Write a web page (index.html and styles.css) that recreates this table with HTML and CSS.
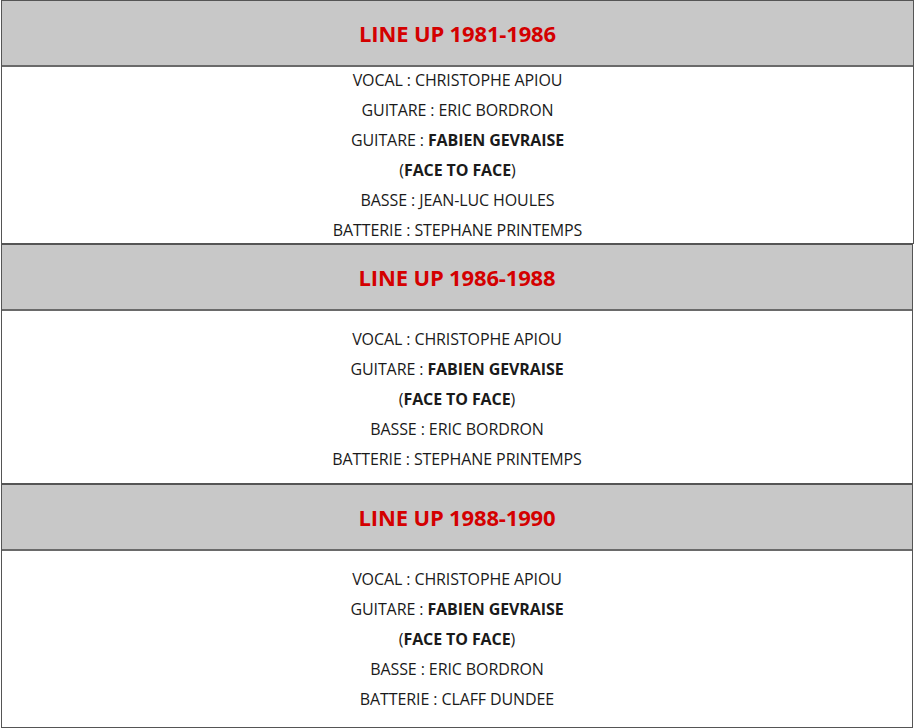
FILE: index.html
```html
<!DOCTYPE html>
<html>
<head>
<meta charset="utf-8">
<link rel="stylesheet" href="styles.css">
</head>
<body>
<div class="page">
  <section class="lineup first">
    <div class="head"><h2>LINE UP 1981-1986</h2></div>
    <div class="body">
      <p>VOCAL : CHRISTOPHE APIOU</p>
      <p>GUITARE : ERIC BORDRON</p>
      <p>GUITARE : <b>FABIEN GEVRAISE</b></p>
      <p>(<b>FACE TO FACE</b>)</p>
      <p>BASSE : JEAN-LUC HOULES</p>
      <p>BATTERIE : STEPHANE PRINTEMPS</p>
    </div>
  </section>
  <section class="lineup">
    <div class="head"><h2>LINE UP 1986-1988</h2></div>
    <div class="body">
      <p>VOCAL : CHRISTOPHE APIOU</p>
      <p>GUITARE : <b>FABIEN GEVRAISE</b></p>
      <p>(<b>FACE TO FACE</b>)</p>
      <p>BASSE : ERIC BORDRON</p>
      <p>BATTERIE : STEPHANE PRINTEMPS</p>
    </div>
  </section>
  <section class="lineup last">
    <div class="head"><h2>LINE UP 1988-1990</h2></div>
    <div class="body">
      <p>VOCAL : CHRISTOPHE APIOU</p>
      <p>GUITARE : <b>FABIEN GEVRAISE</b></p>
      <p>(<b>FACE TO FACE</b>)</p>
      <p>BASSE : ERIC BORDRON</p>
      <p>BATTERIE : CLAFF DUNDEE</p>
    </div>
  </section>
</div>
</body>
</html>
```
FILE: styles.css
```css
html, body {
  margin: 0;
  padding: 0;
  background: #ffffff;
}
.page {
  width: 914px;
  padding-left: 1px;
  box-sizing: border-box;
  font-family: "Open Sans", "Liberation Sans", sans-serif;
  color: #1a1a1a;
}
.lineup {
  width: 912px;
  border: 1px solid #555555;
  border-top: 2px solid #555555;
  box-sizing: border-box;
  display: flex;
  flex-direction: column;
  overflow: hidden;
}
.lineup.first {
  width: 913px;
  border-top-width: 1px;
  height: 244px;
}
.lineup.last {
  height: 245px;
}
.lineup + .lineup {
  margin-top: -1px;
}
.head {
  height: 64px;
  background: #c8c8c8;
  border-bottom: 2px solid #6a6a6a;
  display: flex;
  align-items: center;
  justify-content: center;
  flex-shrink: 0;
}
.head h2 {
  margin: 0;
  font-size: 22px;
  letter-spacing: -0.15px;
  font-weight: 700;
  color: #d40000;
  line-height: 30px;
}
.body {
  padding: 13px 0 9px;
  text-align: center;
}
.first .body {
  padding: 0;
  margin-top: -2px;
}
.body p {
  margin: 0;
  font-size: 16px;
  letter-spacing: -0.1px;
  line-height: 30px;
}
.body b {
  font-weight: 700;
}
```
